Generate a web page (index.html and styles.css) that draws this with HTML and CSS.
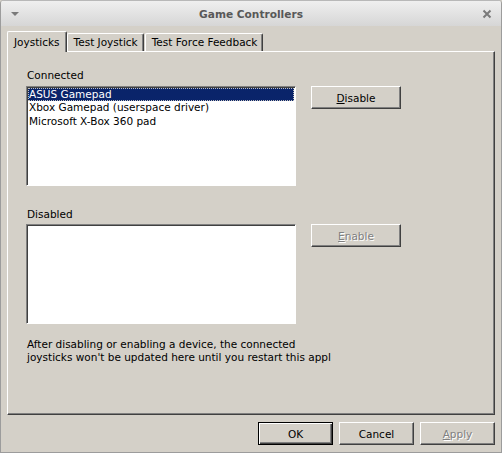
FILE: index.html
```html
<!DOCTYPE html>
<html>
<head>
<meta charset="utf-8">
<link rel="stylesheet" href="styles.css">
</head>
<body>
<div class="window">
  <div class="titlebar">
    <span class="menu-arrow"></span>
    <span class="title">Game Controllers</span>
    <svg class="close" width="10" height="10" viewBox="0 0 10 10"><path d="M1.5 1.5 L8.5 8.5 M8.5 1.5 L1.5 8.5" stroke="#7a7a7a" stroke-width="2" fill="none"/></svg>
  </div>
  <div class="client">
    <div class="tabs">
      <div class="tab active">Joysticks</div>
      <div class="tab">Test Joystick</div>
      <div class="tab">Test Force Feedback</div>
    </div>
    <div class="panel">
      <div class="label">Connected</div>
      <div class="row">
        <div class="listbox">
          <div class="item selected">ASUS Gamepad</div>
          <div class="item">Xbox Gamepad (userspace driver)</div>
          <div class="item">Microsoft X-Box 360 pad</div>
        </div>
        <div class="btn"><span class="ul">D</span>isable</div>
      </div>
      <div class="label second">Disabled</div>
      <div class="row">
        <div class="listbox"></div>
        <div class="btn disabled"><span class="ul">E</span>nable</div>
      </div>
      <p class="note">After disabling or enabling a device, the connected<br>joysticks won't be updated here until you restart this appl</p>
    </div>
    <div class="buttons">
      <div class="btn default">OK</div>
      <div class="btn">Cancel</div>
      <div class="btn disabled"><span class="ul">A</span>pply</div>
    </div>
  </div>
</div>
</body>
</html>
```
FILE: styles.css
```css
html, body {
  margin: 0;
  padding: 0;
  background: #d4d0c8;
}
body {
  font-family: "DejaVu Sans", sans-serif;
  font-size: 10.5px;
  color: #000;
}
.window {
  width: 502px;
  height: 453px;
  box-sizing: border-box;
  border: 1px solid #9c9c9c;
  border-top: none;
  border-radius: 4px 4px 0 0;
  background: #d4d0c8;
  overflow: hidden;
  display: flex;
  flex-direction: column;
}
.titlebar {
  height: 26px;
  flex: none;
  display: flex;
  align-items: center;
  justify-content: center;
  position: relative;
  background: linear-gradient(#efefef, #d6d6d6);
  border-top: 1px solid #b8b8b8;
  box-sizing: border-box;
}
.title {
  font-weight: bold;
  font-size: 10.6px;
  color: #585858;
}
.menu-arrow {
  position: absolute;
  left: 10px;
  top: 11px;
  width: 0;
  height: 0;
  border-left: 4px solid transparent;
  border-right: 4px solid transparent;
  border-top: 4px solid #7a7a7a;
}
.close {
  position: absolute;
  right: 9px;
  top: 8px;
}
.client {
  flex: 1;
  padding: 5px 6px 0 6px;
  display: flex;
  flex-direction: column;
}
.tabs {
  display: flex;
  align-items: flex-end;
  height: 20px;
  position: relative;
  z-index: 1;
}
.tab {
  height: 18px;
  box-sizing: border-box;
  padding: 0 5px 0 6px;
  line-height: 17px;
  border-top: 1px solid #fff;
  border-left: 1px solid #fff;
  border-right: 1px solid #404040;
  box-shadow: inset -1px 0 0 #808080;
  border-radius: 2px 2px 0 0;
  margin-left: 1px;
}
.tab.active {
  height: 21px;
  margin-bottom: -1px;
  background: #d4d0c8;
  margin-left: 0;
  margin-right: -1px;
  padding: 0 6px 0 6px;
  line-height: 20px;
}
.panel {
  width: 488px;
  height: 364px;
  box-sizing: border-box;
  border-top: 1px solid #fff;
  border-left: 1px solid #fff;
  border-right: 1px solid #404040;
  border-bottom: 1px solid #404040;
  box-shadow: inset -1px -1px 0 #808080;
  padding: 16px 0 0 18px;
}
.label {
  height: 14px;
  line-height: 14px;
  margin-bottom: 4px;
  padding-left: 1px;
}
.label.second {
  margin-top: 21px;
  margin-bottom: 3px;
}
.row {
  display: flex;
  align-items: flex-start;
  gap: 15px;
}
.listbox {
  width: 270px;
  height: 100px;
  box-sizing: border-box;
  background: #fff;
  border-top: 1px solid #808080;
  border-left: 1px solid #808080;
  border-right: 1px solid #fff;
  border-bottom: 1px solid #fff;
  box-shadow: inset 1px 1px 0 #404040;
  padding: 1px 1px 0 1px;
}
.item {
  height: 13.5px;
  line-height: 13px;
  padding-left: 1px;
  white-space: nowrap;
}
.item.selected {
  background: #0a246a;
  color: #fff;
  outline: 1px dotted #c0c0c0;
  outline-offset: -1px;
  height: 13px;
}
.btn {
  width: 90px;
  height: 23px;
  box-sizing: border-box;
  border-top: 1px solid #fff;
  border-left: 1px solid #fff;
  border-right: 1px solid #404040;
  border-bottom: 1px solid #404040;
  box-shadow: inset -1px -1px 0 #808080;
  display: flex;
  align-items: center;
  justify-content: center;
  flex: none;
}
.ul {
  text-decoration: underline;
}
.btn.disabled {
  color: #808080;
  text-shadow: 1px 1px 0 #fff;
}
.note {
  margin: 14px 0 0 0;
  line-height: 13px;
  padding-left: 1px;
}
.buttons {
  display: flex;
  justify-content: flex-end;
  gap: 6px;
  padding: 7px 0 0 0;
  width: 488px;
}
.buttons .btn {
  width: 75px;
}
.btn.default {
  border: 1px solid #000;
  box-shadow: inset 1px 1px 0 #fff, inset -1px -1px 0 #404040, inset -2px -2px 0 #808080;
}
```
